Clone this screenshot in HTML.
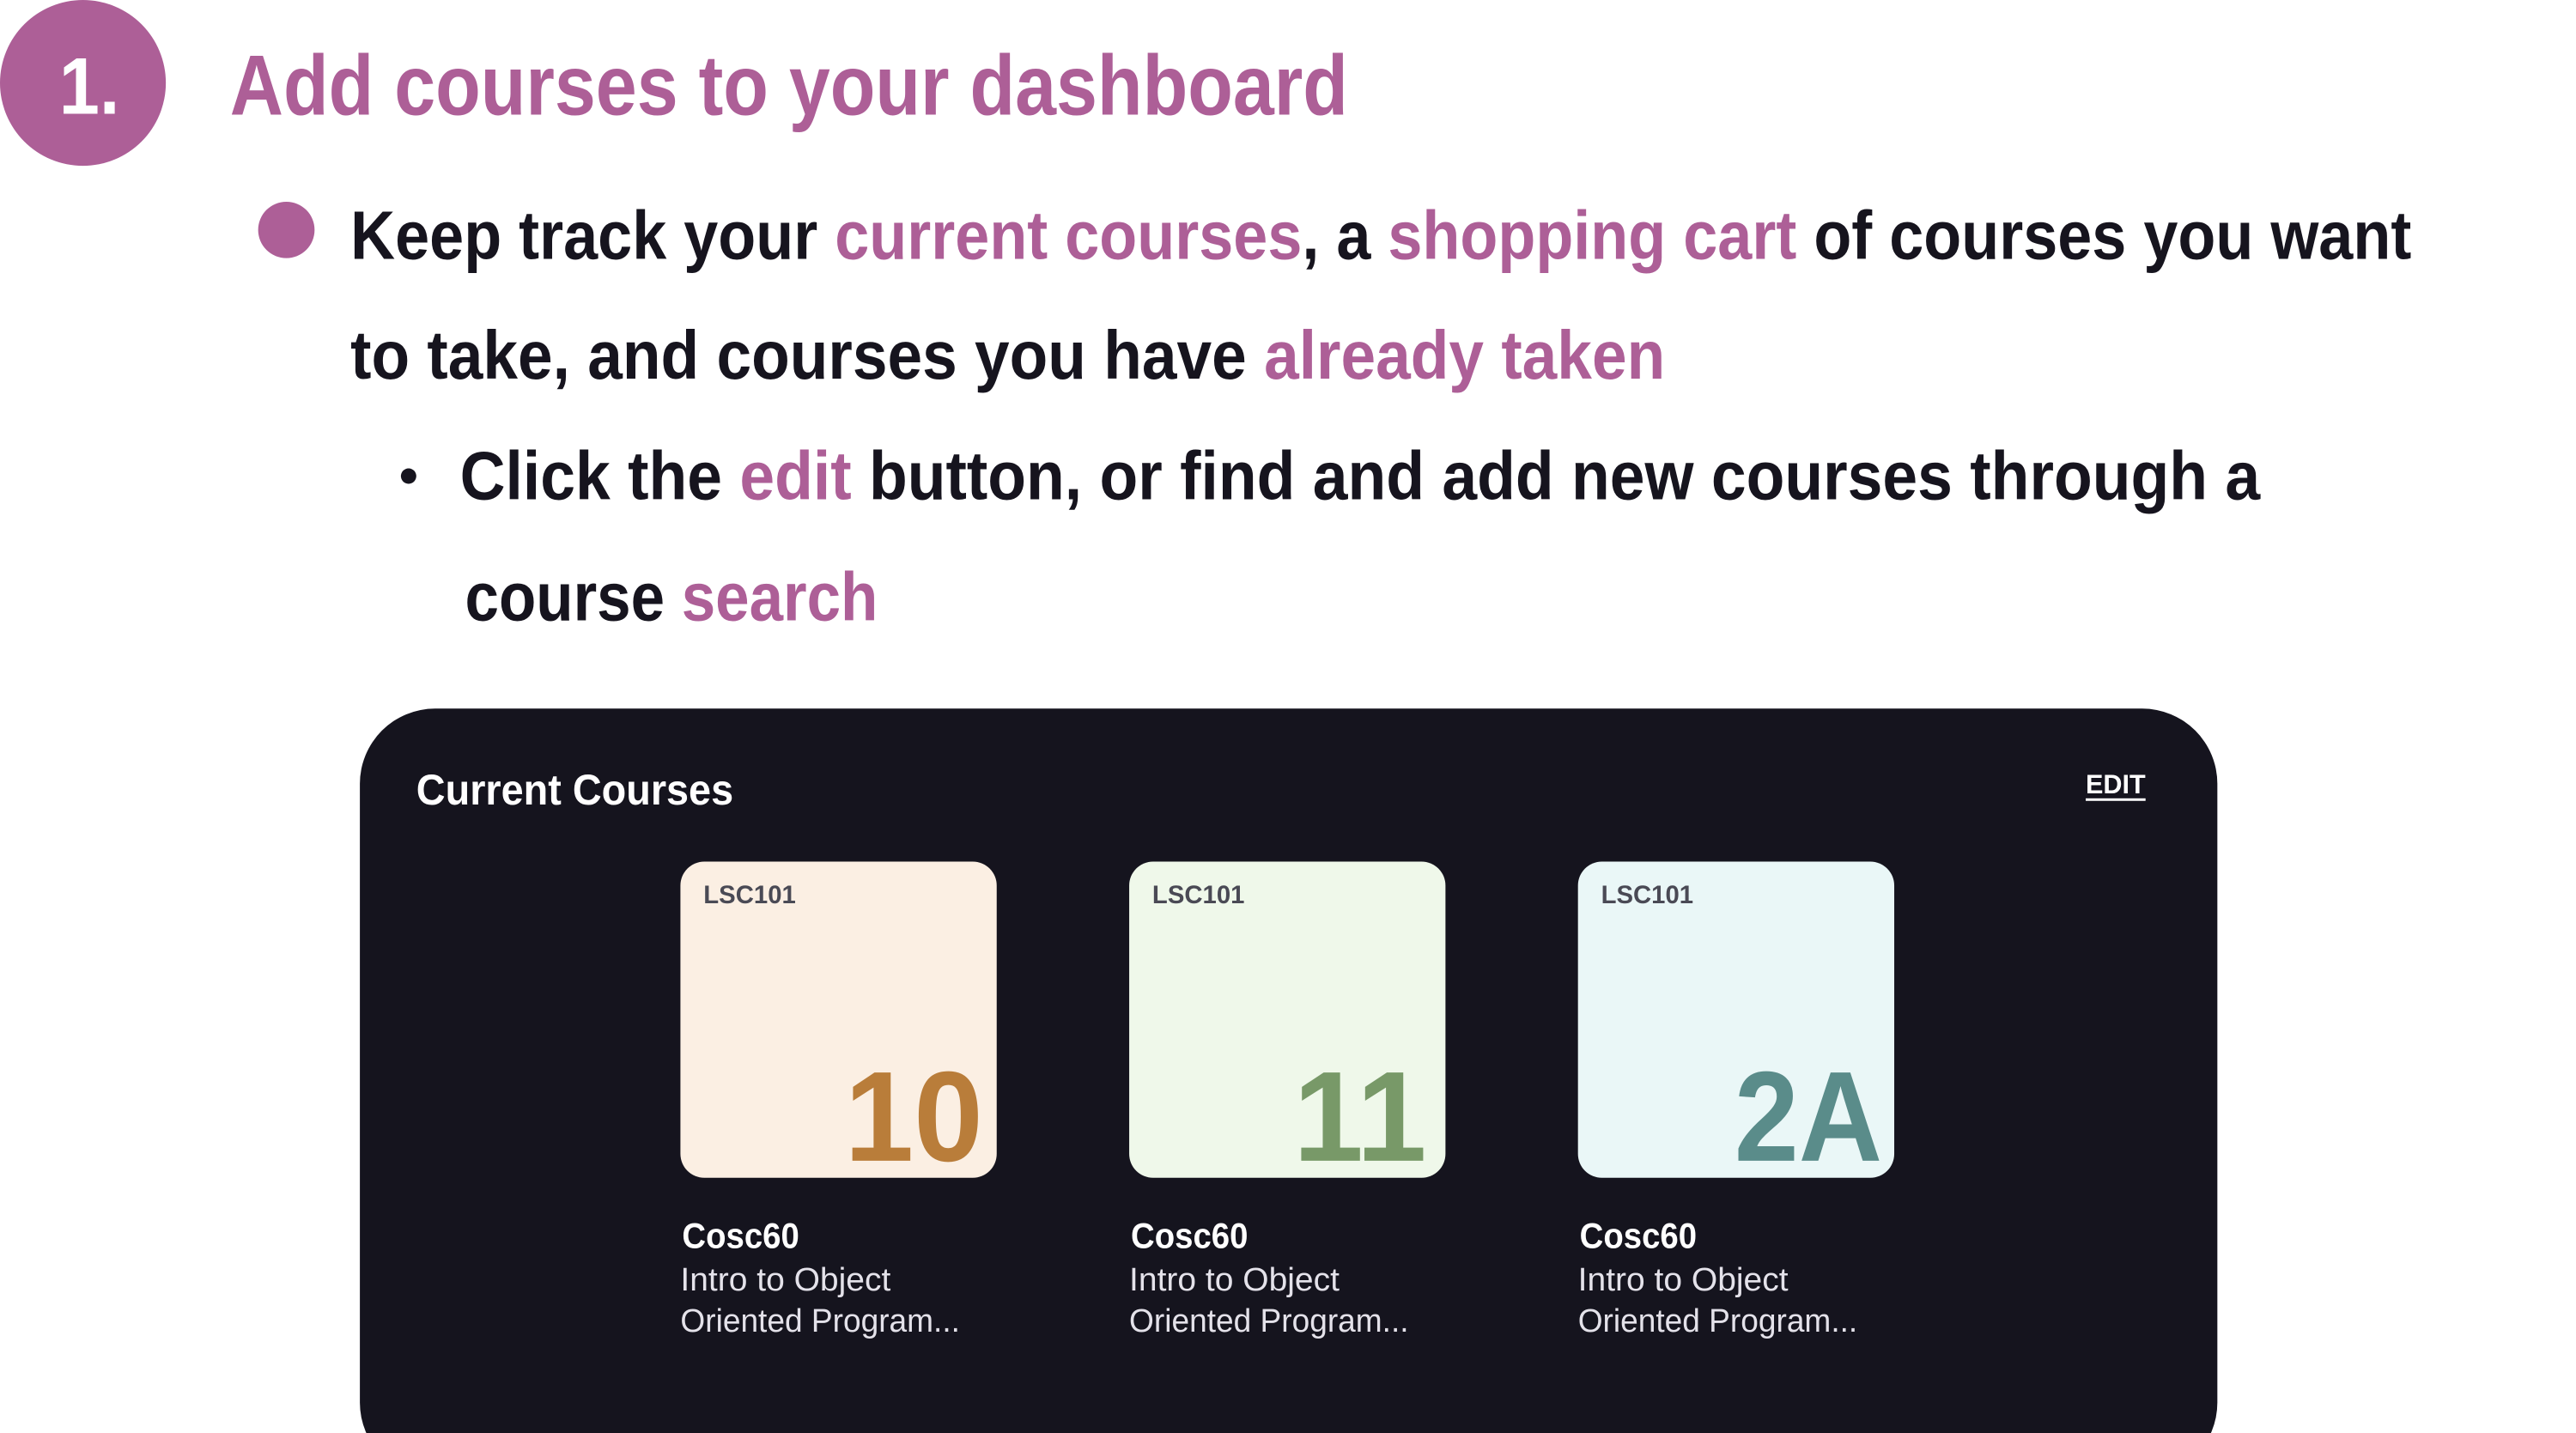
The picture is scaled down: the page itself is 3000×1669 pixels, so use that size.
<!DOCTYPE html>
<html><head><meta charset="utf-8"><style>
html,body{margin:0;padding:0;background:#fff;width:3000px;height:1669px;overflow:hidden}
svg{display:block}
text{font-family:"Liberation Sans",sans-serif}
</style></head><body>
<svg width="3000" height="1669" viewBox="0 0 3000 1669" xmlns="http://www.w3.org/2000/svg">
<rect width="3000" height="1669" fill="#fff"/>
<g transform="scale(0.9955)">
<circle cx="97" cy="97" r="97" fill="#ad5f97"/>
<text x="69" y="133" font-size="94" font-weight="700" fill="#fff" textLength="71" lengthAdjust="spacingAndGlyphs">1.</text>
<text x="269" y="134" font-size="100" font-weight="700" fill="#ad5f97" textLength="1308" lengthAdjust="spacingAndGlyphs">Add courses to your dashboard</text>
<circle cx="335" cy="269" r="33" fill="#ad5f97"/>
<g font-size="80" font-weight="700" fill="#16141e">
<text x="410" y="303" textLength="2411" lengthAdjust="spacingAndGlyphs">Keep track your <tspan fill="#ad5f97">current courses</tspan>, a <tspan fill="#ad5f97">shopping cart</tspan> of courses you want</text>
<text x="410" y="443" textLength="1538" lengthAdjust="spacingAndGlyphs">to take, and courses you have <tspan fill="#ad5f97">already taken</tspan></text>
<circle cx="478" cy="557" r="9" fill="#16141e"/>
<text x="538" y="584" textLength="2106" lengthAdjust="spacingAndGlyphs">Click the <tspan fill="#ad5f97">edit</tspan> button, or find and add new courses through a</text>
<text x="544" y="726" textLength="483" lengthAdjust="spacingAndGlyphs">course <tspan fill="#ad5f97">search</tspan></text>
</g>
<rect x="421" y="829" width="2173" height="900" rx="88" fill="#15141e"/>
<text x="487" y="941" font-size="50" font-weight="700" fill="#fff" textLength="371" lengthAdjust="spacingAndGlyphs">Current Courses</text>
<text x="2440" y="928" font-size="32" font-weight="700" fill="#fff" textLength="70" lengthAdjust="spacingAndGlyphs">EDIT</text>
<rect x="2440" y="934" width="70" height="3" fill="#fff"/>
<g>
<rect x="796" y="1008" width="370" height="370" rx="28" fill="#fbefe3"/>
<text x="823" y="1057" font-size="30" font-weight="700" fill="#4a4a55" textLength="108" lengthAdjust="spacingAndGlyphs">LSC101</text>
<text x="988" y="1358" font-size="150" font-weight="700" fill="#b97d3a" textLength="162" lengthAdjust="spacingAndGlyphs">10</text>
<text x="798" y="1460" font-size="42" font-weight="700" fill="#fff" textLength="137" lengthAdjust="spacingAndGlyphs">Cosc60</text>
<text x="796" y="1510" font-size="38" fill="#e4e2ea" textLength="246" lengthAdjust="spacingAndGlyphs">Intro to Object</text>
<text x="796" y="1558" font-size="38" fill="#e4e2ea" textLength="327" lengthAdjust="spacingAndGlyphs">Oriented Program...</text>
</g>
<g>
<rect x="1321" y="1008" width="370" height="370" rx="28" fill="#eff8ea"/>
<text x="1348" y="1057" font-size="30" font-weight="700" fill="#4a4a55" textLength="108" lengthAdjust="spacingAndGlyphs">LSC101</text>
<text x="1513" y="1358" font-size="150" font-weight="700" fill="#789968" textLength="156" lengthAdjust="spacingAndGlyphs">11</text>
<text x="1323" y="1460" font-size="42" font-weight="700" fill="#fff" textLength="137" lengthAdjust="spacingAndGlyphs">Cosc60</text>
<text x="1321" y="1510" font-size="38" fill="#e4e2ea" textLength="246" lengthAdjust="spacingAndGlyphs">Intro to Object</text>
<text x="1321" y="1558" font-size="38" fill="#e4e2ea" textLength="327" lengthAdjust="spacingAndGlyphs">Oriented Program...</text>
</g>
<g>
<rect x="1846" y="1008" width="370" height="370" rx="28" fill="#eaf7f7"/>
<text x="1873" y="1057" font-size="30" font-weight="700" fill="#4a4a55" textLength="108" lengthAdjust="spacingAndGlyphs">LSC101</text>
<text x="2029" y="1358" font-size="150" font-weight="700" fill="#5a8c8a" textLength="173" lengthAdjust="spacingAndGlyphs">2A</text>
<text x="1848" y="1460" font-size="42" font-weight="700" fill="#fff" textLength="137" lengthAdjust="spacingAndGlyphs">Cosc60</text>
<text x="1846" y="1510" font-size="38" fill="#e4e2ea" textLength="246" lengthAdjust="spacingAndGlyphs">Intro to Object</text>
<text x="1846" y="1558" font-size="38" fill="#e4e2ea" textLength="327" lengthAdjust="spacingAndGlyphs">Oriented Program...</text>
</g>
</g>
</svg>
</body></html>
